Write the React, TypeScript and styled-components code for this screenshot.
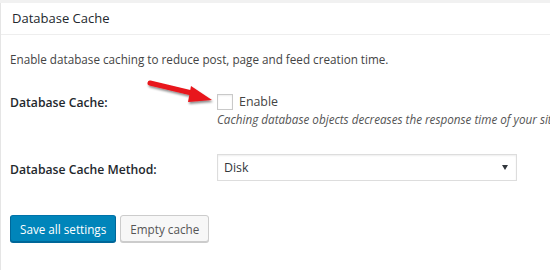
import * as React from "react";
import styled, { createGlobalStyle } from "styled-components";

const GlobalStyle = createGlobalStyle`
  html, body {
    margin: 0;
    padding: 0;
    background: #ffffff;
  }
  body {
    font-family: "Open Sans", "Noto Sans", sans-serif;
    color: #444;
  }
`;

const Page = styled.div`
  width: 550px;
  height: 270px;
  background: #f1f1f1;
  padding-top: 3px;
  box-sizing: border-box;
  overflow: hidden;
`;

const Panel = styled.div`
  background: #fff;
  border-left: 1px solid #e5e5e5;
  height: 100%;
  box-sizing: border-box;
`;

const PanelHeader = styled.h3`
  margin: 0;
  padding: 6px 12px 0 11px;
  height: 32px;
  box-sizing: border-box;
  font-size: 13px;
  font-weight: 400;
  color: #23282d;
  border-bottom: 1px solid #eeeeee;
`;

const Body = styled.div`
  padding: 16px 10px 0 9px;
`;

const Intro = styled.p`
  margin: 0;
  font-size: 11.7px;
  color: #444;
`;

const Row = styled.div<{ top: number }>`
  display: grid;
  grid-template-columns: 207px 1fr;
  align-items: start;
  margin-top: ${(p) => p.top}px;
`;

const Label = styled.div<{ pad?: number }>`
  font-size: 12.2px;
  font-weight: 600;
  color: #23282d;
  padding-top: ${(p) => p.pad ?? 0}px;
`;

const Field = styled.div`
  position: relative;
`;

const CheckLine = styled.label`
  display: flex;
  align-items: center;
  gap: 6px;
  font-size: 12.4px;
  color: #444;
  white-space: nowrap;
`;

const Check = styled.span`
  width: 14px;
  height: 14px;
  border: 1px solid #c9c9c9;
  box-shadow: inset 0 1px 2px rgba(0, 0, 0, 0.07);
  background: #fff;
`;

const Hint = styled.div`
  font-size: 11.7px;
  font-style: italic;
  color: #555;
  white-space: nowrap;
  margin-top: 1px;
`;

const Select = styled.div`
  width: 300px;
  height: 27px;
  box-sizing: border-box;
  border: 1px solid #dddddd;
  box-shadow: inset 0 1px 2px rgba(0, 0, 0, 0.07);
  display: flex;
  align-items: center;
  justify-content: space-between;
  padding: 0 8px 0 6px;
  font-size: 12.4px;
  color: #32373c;
`;

const Caret = styled.span`
  width: 0;
  height: 0;
  border-left: 3px solid transparent;
  border-right: 3px solid transparent;
  border-top: 5px solid #32373c;
`;

const Buttons = styled.div`
  display: flex;
  gap: 4px;
  margin-top: 34px;
`;

const Button = styled.button<{ primary?: boolean }>`
  font-family: inherit;
  font-size: 11.7px;
  height: 27px;
  padding: 0 9px;
  margin: 0;
  border-radius: 3px;
  cursor: pointer;
  background: ${(p) => (p.primary ? "#0085ba" : "#f7f7f7")};
  color: ${(p) => (p.primary ? "#fff" : "#555")};
  border-width: 1px;
  border-style: solid;
  border-color: ${(p) => (p.primary ? "#0073aa #006799 #006799" : "#cccccc")};
  box-shadow: ${(p) => (p.primary ? "0 1px 0 #006799" : "0 1px 0 #cccccc")};
`;

const Arrow = styled.svg`
  position: absolute;
  left: -66px;
  top: -13px;
  overflow: visible;
`;

export default function App() {
  return (
    <>
      <GlobalStyle />
      <Page>
        <Panel>
          <PanelHeader>Database Cache</PanelHeader>
          <Body>
            <Intro>Enable database caching to reduce post, page and feed creation time.</Intro>
            <Row top={26}>
              <Label pad={1}>Database Cache:</Label>
              <Field>
                <Arrow width="64" height="30" viewBox="0 0 64 30">
                  <defs>
                    <filter id="sh" x="-20%" y="-50%" width="140%" height="200%">
                      <feDropShadow dx="1" dy="2" stdDeviation="1.2" floodColor="#000" floodOpacity="0.45" />
                    </filter>
                  </defs>
                  <g filter="url(#sh)">
                    <path
                      d="M-1 3 L45 14"
                      stroke="#e8141a"
                      strokeWidth="5"
                      strokeLinecap="round"
                      fill="none"
                    />
                    <path d="M40 6 L61 20 L37 22 Z" fill="#e8141a" />
                  </g>
                </Arrow>
                <CheckLine>
                  <Check />
                  Enable
                </CheckLine>
                <Hint>Caching database objects decreases the response time of your site.</Hint>
              </Field>
            </Row>
            <Row top={27}>
              <Label pad={7}>Database Cache Method:</Label>
              <Select>
                Disk
                <Caret />
              </Select>
            </Row>
            <Buttons>
              <Button primary>Save all settings</Button>
              <Button>Empty cache</Button>
            </Buttons>
          </Body>
        </Panel>
      </Page>
    </>
  );
}
